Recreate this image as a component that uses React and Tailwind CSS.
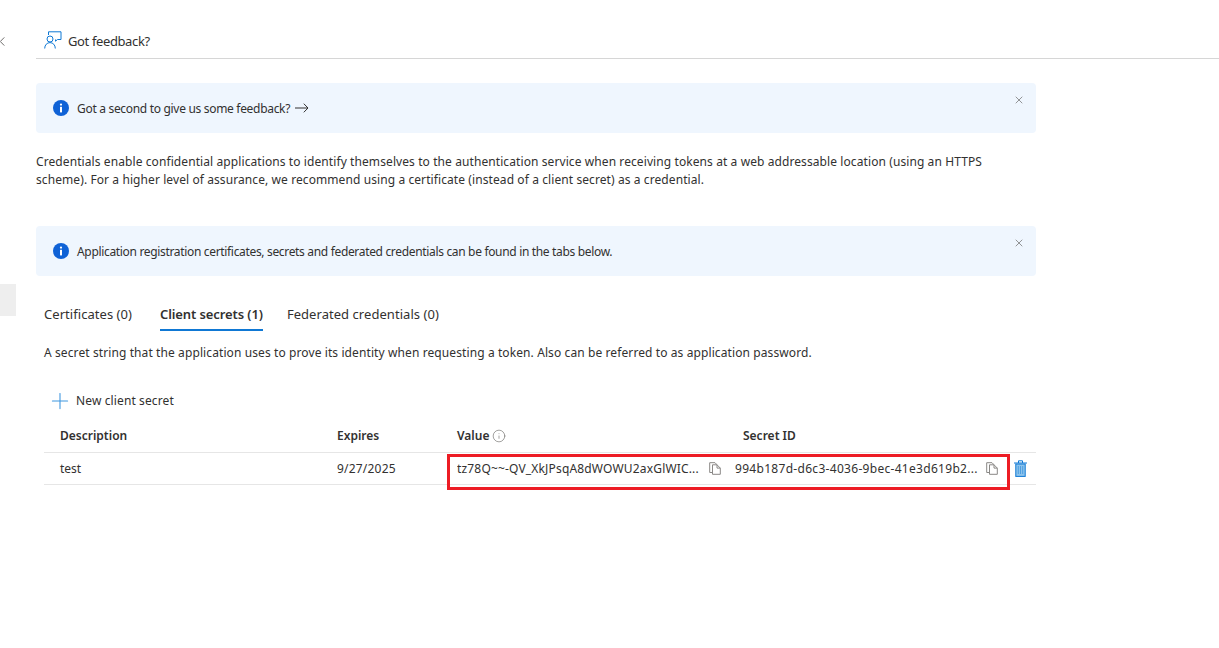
import React from "react";
import { X, Info, Plus } from "lucide-react";

const FONT = "font-['Noto_Sans',sans-serif]";

const InfoDot = () => (
  <svg width="16" height="16" viewBox="0 0 16 16" className="shrink-0">
    <circle cx="8" cy="8" r="8" fill="#0f62d6" />
    <rect x="7" y="6.8" width="2" height="5.6" fill="#fff" />
    <circle cx="8" cy="4.6" r="1.15" fill="#fff" />
  </svg>
);

const FeedbackIcon = () => (
  <svg width="18" height="18" viewBox="0 0 18 18" fill="none" stroke="#0f78d4" strokeWidth="1">
    <path d="M4.5 4V0.8H17V8.5H13.5L11.5 10.2V8.5" />
    <circle cx="6" cy="8" r="3" />
    <path d="M0.7 17.5C0.7 14 3 11.6 6 11.6C9 11.6 11.3 14 11.3 17.5" />
  </svg>
);

const CopyIcon = () => (
  <svg width="12" height="13" viewBox="0 0 12 13" fill="none" stroke="#8a8886" strokeWidth="1">
    <path d="M3.5 10.5H0.7V0.7H6L8 2.7" />
    <path d="M3.5 2.8H8L11.3 6.1V12.3H3.5Z" />
    <path d="M8 2.8V6.1H11.3" />
  </svg>
);

const TrashIcon = () => (
  <svg width="13" height="17" viewBox="0 0 13 17">
    <rect x="1.8" y="4" width="9.4" height="12.4" fill="#8cc3ec" stroke="#0f78d4" strokeWidth="1" />
    <path d="M0 3H13M4.5 3V0.8H8.5V3" fill="none" stroke="#0f78d4" strokeWidth="1" />
    <path d="M4.3 6V14M6.5 6V14M8.7 6V14" stroke="#0f78d4" strokeWidth="0.5" />
  </svg>
);

const Banner = ({ children }) => (
  <div className="relative flex h-[50px] w-[1000px] items-center gap-2 rounded-sm bg-[#eff6fe] pl-[17px] text-[12px] text-[#323130]">
    <InfoDot />
    {children}
    <X size={12} strokeWidth={1.3} className="absolute right-[11px] top-[11px] text-[#605e5c]" />
  </div>
);

export default function App() {
  return (
    <div className={`${FONT} relative flex h-[648px] w-[1219px] overflow-hidden bg-white text-[#323130]`}>
      {/* Left blade edge */}
      <div className="w-[36px] shrink-0">
        <svg width="5" height="9" viewBox="0 0 5 9" fill="none" stroke="#605e5c" strokeWidth="0.9" className="mt-[37px]">
          <path d="M4.3 0.4L0.3 4.5L4.3 8.6" />
        </svg>
        <div className="mt-[238px] h-[32px] w-[16px] bg-[#eeeeee]" />
      </div>

      <div className="flex-1">
        {/* Command bar */}
        <div className="flex h-[59px] items-end border-b border-[#d6d6d6] pb-[9px] pl-[8px]">
          <FeedbackIcon />
          <span className="ml-[6px] translate-y-px text-[13px] leading-[18px] tracking-[-0.38px]">Got feedback?</span>
        </div>

        <div className="mt-[24px]">
          <Banner>
            <span className="mt-[2px] tracking-[-0.31px]">Got a second to give us some feedback?</span>
            <svg width="14" height="10" viewBox="0 0 14 10" fill="none" stroke="#323130" strokeWidth="1" className="-ml-[3px] shrink-0">
              <path d="M0 5H13M8.8 0.7L13 5L8.8 9.3" />
            </svg>
          </Banner>
        </div>

        <p className="mt-[20px] w-[960px] text-[12px] leading-[18px] tracking-[0.09px]">
          Credentials enable confidential applications to identify themselves to the authentication service when receiving tokens at a web addressable location (using an HTTPS scheme). For a higher level of assurance, we recommend using a certificate (instead of a client secret) as a credential.
        </p>

        <div className="mt-[37px]">
          <Banner>
            <span className="mt-[2px] tracking-[-0.33px]">Application registration certificates, secrets and federated credentials can be found in the tabs below.</span>
          </Banner>
        </div>

        {/* Tabs */}
        <div className="ml-[8px] mt-[29px] flex text-[13px] leading-[18px]">
          <div className="w-[116px] pb-[6px] tracking-[0.05px]">Certificates (0)</div>
          <div className="border-b-2 border-[#0f78d4] pb-[6px] font-semibold tracking-[-0.1px]">Client secrets (1)</div>
          <div className="ml-[24px] pb-[6px] tracking-[0.05px]">Federated credentials (0)</div>
        </div>

        <p className="ml-[8px] mt-[13px] text-[12px] leading-[18px] tracking-[0.1px]">
          A secret string that the application uses to prove its identity when requesting a token. Also can be referred to as application password.
        </p>

        <div className="ml-[16px] mt-[30px] flex h-[18px] items-center gap-[9px] text-[12px] tracking-[0.12px]">
          <Plus size={26} strokeWidth={1} className="-m-[5.5px] shrink-0 text-[#3f97e0]" />
          <span>New client secret</span>
        </div>

        {/* Secrets table */}
        <div className="relative ml-[8px] mt-[9px] w-[992px] text-[12px]">
          <div className="flex h-[34px] items-center border-b border-[#e6e6e6] pt-[1px] font-semibold">
            <div className="w-[293px] pl-[16px]">Description</div>
            <div className="w-[120px]">Expires</div>
            <div className="flex w-[286px] items-center gap-[3px]">
              Value
              <Info size={14} strokeWidth={1} className="text-[#605e5c]" />
            </div>
            <div>Secret ID</div>
          </div>
          <div className="flex h-[32px] items-center border-b border-[#e6e6e6]">
            <div className="w-[293px] pl-[16px]">test</div>
            <div className="w-[120px] tracking-[0.2px]">9/27/2025</div>
            <div className="flex w-[278px] items-center">
              <span className="w-[252px] truncate tracking-[0.17px]">tz78Q~~-QV_XkJPsqA8dWOWU2axGlWIC...</span>
              <CopyIcon />
            </div>
            <div className="flex items-center">
              <span className="w-[251px] truncate tracking-[0.3px]">994b187d-d6c3-4036-9bec-41e3d619b2...</span>
              <CopyIcon />
            </div>
            <div className="ml-[16px]">
              <TrashIcon />
            </div>
          </div>
          {/* Red annotation around the values */}
          <div className="absolute left-[403px] top-[35px] h-[36px] w-[563px] border-[3px] border-[#ed1c24]" />
        </div>
      </div>
    </div>
  );
}
